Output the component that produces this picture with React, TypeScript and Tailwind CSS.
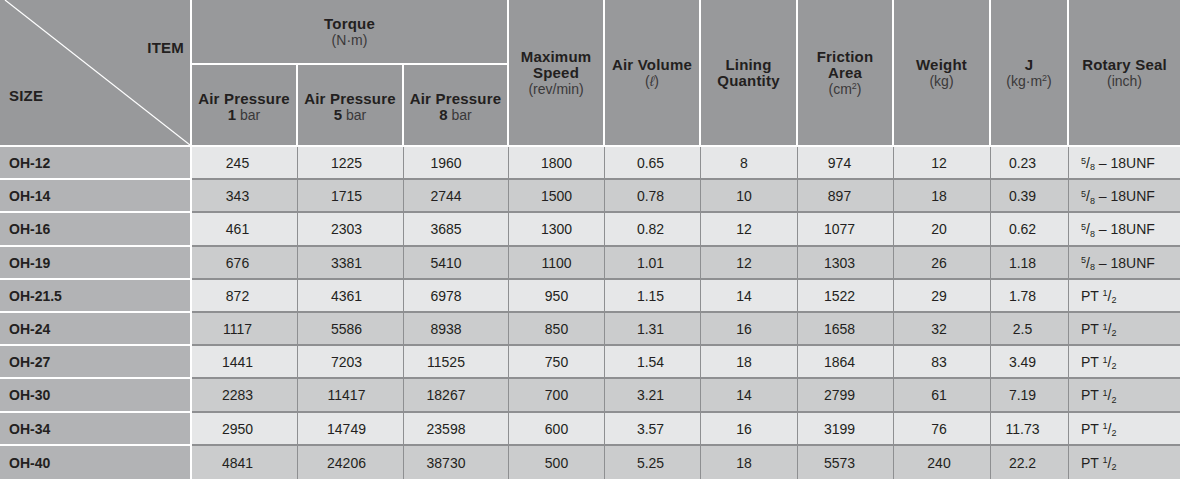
import React from 'react';

const widths = [192, 106, 106, 105, 96, 96, 97, 96, 97, 78, 111];
// small per-column nudge of data text (the source table is not perfectly centred)
const nudge = ['', 'pr-[14px]', 'pr-[8px]', 'pr-[20px]', '', 'pr-[4px]', 'pr-[10px]', 'pr-[12px]', 'pr-[6px]', 'pr-[14px]', ''];

type Row = [string, string, string, string, string, string, string, string, string, string, 'unf' | 'pt'];

const rows: Row[] = [
  ['OH-12', '245', '1225', '1960', '1800', '0.65', '8', '974', '12', '0.23', 'unf'],
  ['OH-14', '343', '1715', '2744', '1500', '0.78', '10', '897', '18', '0.39', 'unf'],
  ['OH-16', '461', '2303', '3685', '1300', '0.82', '12', '1077', '20', '0.62', 'unf'],
  ['OH-19', '676', '3381', '5410', '1100', '1.01', '12', '1303', '26', '1.18', 'unf'],
  ['OH-21.5', '872', '4361', '6978', '950', '1.15', '14', '1522', '29', '1.78', 'pt'],
  ['OH-24', '1117', '5586', '8938', '850', '1.31', '16', '1658', '32', '2.5', 'pt'],
  ['OH-27', '1441', '7203', '11525', '750', '1.54', '18', '1864', '83', '3.49', 'pt'],
  ['OH-30', '2283', '11417', '18267', '700', '3.21', '14', '2799', '61', '7.19', 'pt'],
  ['OH-34', '2950', '14749', '23598', '600', '3.57', '16', '3199', '76', '11.73', 'pt'],
  ['OH-40', '4841', '24206', '38730', '500', '5.25', '18', '5573', '240', '22.2', 'pt'],
];

const Bold = ({ children }: { children: React.ReactNode }) => (
  <div className="font-bold text-[15px] tracking-[0.2px] text-[#231f20]">{children}</div>
);
const Unit = ({ children }: { children: React.ReactNode }) => (
  <div className="text-[14px] text-[#3a3839]">{children}</div>
);

const HeadCell = ({ w, last, children }: { w: number; last?: boolean; children: React.ReactNode }) => (
  <div
    style={{ width: w }}
    className={`h-[147px] shrink-0 flex flex-col items-center justify-center text-center leading-[16px] border-b-2 border-white ${last ? '' : 'border-r-2'}`}
  >
    {children}
  </div>
);

const Pressure = ({ w, bar }: { w: number; bar: string }) => (
  <div
    style={{ width: w }}
    className="h-[82px] shrink-0 flex flex-col items-center justify-center pt-[3px] text-center leading-[16px] border-r-2 border-b-2 border-white"
  >
    <Bold>Air Pressure</Bold>
    <div className="text-[14px] text-[#3a3839]">
      <span className="font-bold text-[15px] text-[#231f20]">{bar}</span> bar
    </div>
  </div>
);

const Seal = ({ kind }: { kind: 'unf' | 'pt' }) =>
  kind === 'unf' ? (
    <span>
      <sup className="text-[9px]">5</sup>/<sub className="text-[9px]">8</sub> – 18UNF
    </span>
  ) : (
    <span>
      PT <sup className="text-[9px]">1</sup>/<sub className="text-[9px]">2</sub>
    </span>
  );

export default function App() {
  return (
    <div
      className="w-[1180px] h-[479px] overflow-hidden bg-[#98999b] text-[#231f20]"
      style={{ fontFamily: '"Liberation Sans", Arial, sans-serif' }}
    >
      {/* header */}
      <div className="flex">
        <div
          style={{ width: widths[0] }}
          className="relative h-[147px] shrink-0 border-r-2 border-b-2 border-white flex flex-col leading-[16px]"
        >
          <svg className="absolute inset-0" width="190" height="145" viewBox="0 0 190 145">
            <line x1="5" y1="0" x2="190" y2="145" stroke="#ffffff" strokeWidth="1.2" />
          </svg>
          <div className="pt-[40px] pr-[6px] text-right font-bold text-[15px] tracking-[0.2px]">ITEM</div>
          <div className="mt-[32px] pl-[9px] font-bold text-[15px] tracking-[0.2px]">SIZE</div>
        </div>

        <div className="flex flex-col shrink-0" style={{ width: widths[1] + widths[2] + widths[3] }}>
          <div className="h-[65px] flex flex-col items-center justify-center leading-[17px] border-r-2 border-b-2 border-white">
            <Bold>Torque</Bold>
            <Unit>(N·m)</Unit>
          </div>
          <div className="flex">
            <Pressure w={widths[1]} bar="1" />
            <Pressure w={widths[2]} bar="5" />
            <Pressure w={widths[3]} bar="8" />
          </div>
        </div>

        <HeadCell w={widths[4]}>
          <Bold>Maximum</Bold>
          <Bold>Speed</Bold>
          <Unit>(rev/min)</Unit>
        </HeadCell>
        <HeadCell w={widths[5]}>
          <Bold>Air Volume</Bold>
          <Unit>
            (<span className="italic">ℓ</span>)
          </Unit>
        </HeadCell>
        <HeadCell w={widths[6]}>
          <Bold>Lining</Bold>
          <Bold>Quantity</Bold>
        </HeadCell>
        <HeadCell w={widths[7]}>
          <Bold>Friction</Bold>
          <Bold>Area</Bold>
          <Unit>
            (cm<sup className="text-[9px]">2</sup>)
          </Unit>
        </HeadCell>
        <HeadCell w={widths[8]}>
          <Bold>Weight</Bold>
          <Unit>(kg)</Unit>
        </HeadCell>
        <HeadCell w={widths[9]}>
          <Bold>J</Bold>
          <Unit>
            (kg·m<sup className="text-[9px]">2</sup>)
          </Unit>
        </HeadCell>
        <HeadCell w={widths[10]} last>
          <Bold>Rotary Seal</Bold>
          <Unit>(inch)</Unit>
        </HeadCell>
      </div>

      {/* body */}
      {rows.map((r, i) => {
        const bg = i % 2 === 0 ? 'bg-[#e6e7e8]' : 'bg-[#cbcccd]';
        const last = i === rows.length - 1;
        return (
          <div key={r[0]} className={`flex h-[33.2px] ${bg}`}>
            <div
              style={{ width: widths[0] }}
              className={`shrink-0 flex items-center pl-[9px] pt-[2px] bg-[#b2b3b5] border-r-2 border-white font-bold text-[14px] ${last ? '' : 'border-b-2'}`}
            >
              {r[0]}
            </div>
            {r.slice(1, 10).map((v, j) => (
              <div
                key={j}
                style={{ width: widths[j + 1] }}
                className={`shrink-0 flex items-center justify-center pt-[2px] text-[14px] border-r border-[#8e8f91] ${last ? '' : 'border-b-2'} ${nudge[j + 1]}`}
              >
                {v}
              </div>
            ))}
            <div
              style={{ width: widths[10] }}
              className={`shrink-0 flex items-center pl-[12px] pt-[2px] text-[14px] border-[#8e8f91] ${last ? '' : 'border-b-2'}`}
            >
              <Seal kind={r[10]} />
            </div>
          </div>
        );
      })}
    </div>
  );
}
